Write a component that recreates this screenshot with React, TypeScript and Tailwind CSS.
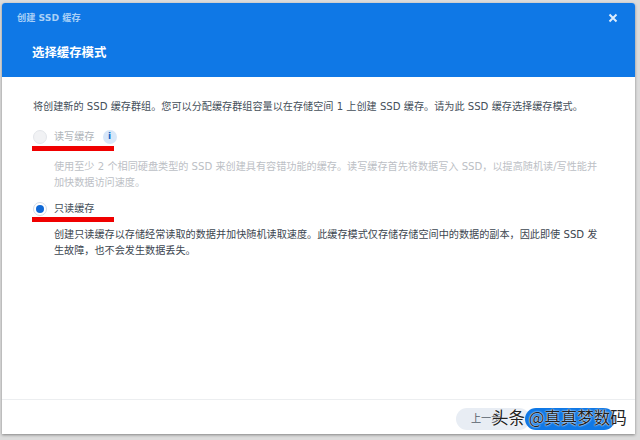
const font = "font-['DejaVu_Sans','Noto_Sans_CJK_SC',sans-serif]"

export default function App() {
  return (
    <div className={`relative w-[640px] h-[440px] overflow-hidden bg-[#dcdcdc] pt-[3px] pl-[2px] ${font}`}>
      <div className="w-[633px] h-[431px] bg-white rounded-t-[3px] flex flex-col shadow-[0_1px_3px_rgba(0,0,0,0.4)]">
        {/* Header */}
        <div className="h-[74px] shrink-0 bg-[#0f78e6] rounded-t-[3px] flex flex-col">
          <div className="flex items-center justify-between h-[30px] pl-[15px] pr-[17px]">
            <span className="text-[9.2px] font-bold text-[#a9d0f7]">创建 SSD 缓存</span>
            <svg width="10" height="10" viewBox="0 0 10 10" fill="none" stroke="#dcecfc" strokeWidth="2">
              <path d="M1.5 1.5l7 7M8.5 1.5l-7 7" />
            </svg>
          </div>
          <div className="pl-[30px] mt-[10px] text-[12.4px] leading-[20px] font-bold text-white">选择缓存模式</div>
        </div>

        {/* Content */}
        <div className="flex-1 pl-[31px] pt-[21px] text-[10.15px] text-[#454f5a]">
          <p className="leading-[18px] whitespace-nowrap">
            将创建新的 SSD 缓存群组。您可以分配缓存群组容量以在存储空间 1 上创建 SSD 缓存。请为此 SSD 缓存选择缓存模式。
          </p>

          <div className="flex items-center mt-[12px] h-[18px]">
            <span className="w-[14px] h-[14px] rounded-full border border-[#e3e6ea] bg-[#f1f2f4]" />
            <span className="ml-[7px] text-[#b0b5ba]">读写缓存</span>
            <span className="ml-[8px] w-[14px] h-[14px] rounded-full bg-[#d7e7f9] flex items-center justify-center text-[9px] font-bold text-[#0f68c6]">
              i
            </span>
          </div>

          <div className="pl-[21px] mt-[13px] w-[586px] leading-[16px] text-[#bcc0c5]">
            <p>使用至少 2 个相同硬盘类型的 SSD 来创建具有容错功能的缓存。读写缓存首先将数据写入 SSD，以提高随机读/写性能并</p>
            <p>加快数据访问速度。</p>
          </div>

          <div className="flex items-center mt-[9px] h-[18px]">
            <span className="w-[14px] h-[14px] rounded-full border border-[#d5dce5] bg-white flex items-center justify-center">
              <span className="w-[8px] h-[8px] rounded-full bg-[#0f68d6]" />
            </span>
            <span className="ml-[7px]">只读缓存</span>
          </div>

          <div className="pl-[21px] mt-[9px] w-[586px] leading-[16px] text-[#3c4650]">
            <p>创建只读缓存以存储经常读取的数据并加快随机读取速度。此缓存模式仅存储存储空间中的数据的副本，因此即使 SSD 发</p>
            <p>生故障，也不会发生数据丢失。</p>
          </div>
        </div>

        {/* Footer */}
        <div className="h-[35px] shrink-0 border-t border-[#eceef0] flex items-start justify-end pt-[8px] pr-[20px]">
          <div className="w-[74px] h-[22px] -mr-[5px] rounded-full bg-[#e8edf4] text-[10.15px] leading-[22px] pl-[15px] text-[#56606b]">上一步</div>
          <div className="relative w-[90px] h-[22px] rounded-full bg-[#0f78e6]" />
        </div>
      </div>

      {/* Red annotation lines */}
      <div className="absolute left-[32px] top-[146px] w-[82px] h-[5px] bg-[#f00000]" />
      <div className="absolute left-[32px] top-[217px] w-[82px] h-[5px] bg-[#f00000]" />

      {/* Watermark */}
      <div className="absolute left-[492px] top-[405px] text-[16.5px] leading-[24px] whitespace-nowrap text-[#222] [text-shadow:0_0_2px_#fff,0_0_1px_#fff] font-['Noto_Sans_CJK_SC',sans-serif]">
        头条 @真真梦数码
      </div>
    </div>
  )
}
